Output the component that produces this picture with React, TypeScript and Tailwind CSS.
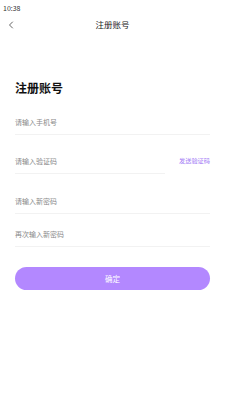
import { ChevronLeft } from "lucide-react";

const font = { fontFamily: '"Noto Sans CJK SC", "Noto Sans", sans-serif' };

function Field({ label, line = "w-full", extra }: { label: string; line?: string; extra?: string }) {
  return (
    <div className="relative">
      <div className="h-[23px] flex items-center text-[7px] leading-none text-[#8a8a8a]">{label}</div>
      <div className={`h-px bg-[#f2f2f2] ${line}`} />
      {extra && (
        <div className="absolute right-0 top-0 h-[23px] flex items-center text-[6.2px] leading-none text-[#a37cf5]">{extra}</div>
      )}
    </div>
  );
}

export default function App() {
  return (
    <div className="w-[225px] h-[400px] bg-white flex flex-col" style={font}>
      <div className="h-[14px] pl-[3px] pt-[4px] text-[7px] leading-[8px] text-[#333]">10:38</div>
      <div className="relative h-[18px] flex items-center justify-center">
        <ChevronLeft className="absolute left-[5px] top-[5px] w-[12px] h-[12px] text-[#333]" strokeWidth={1.5} />
        <span className="text-[8.5px] leading-none text-[#222] translate-y-[1px]">注册账号</span>
      </div>
      <div className="px-[15px] flex flex-col">
        <div className="mt-[48px] text-[12px] font-bold leading-[16px] text-[#111]">注册账号</div>
        <div className="mt-[15px]"><Field label="请输入手机号" /></div>
        <div className="mt-[15px]"><Field label="请输入验证码" line="w-[150px]" extra="发送验证码" /></div>
        <div className="mt-[16px]"><Field label="请输入新密码" /></div>
        <div className="mt-[9px]"><Field label="再次输入新密码" /></div>
        <button className="mt-[20px] h-[23px] rounded-full bg-[#b388ff] text-white text-[7.5px] leading-none flex items-center justify-center">确定</button>
      </div>
    </div>
  );
}
